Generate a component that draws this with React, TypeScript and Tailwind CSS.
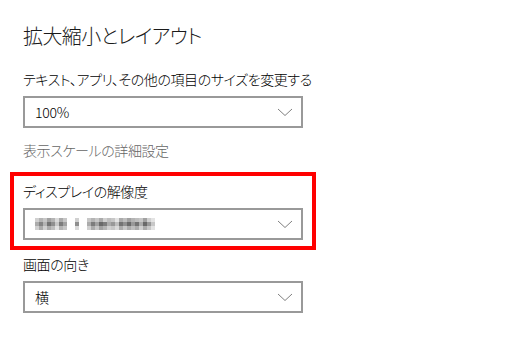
import React from "react";

const font = {
  fontFamily: '"Noto Sans CJK JP", "Noto Sans", sans-serif',
};

function Chevron() {
  return (
    <svg width="16" height="9" viewBox="0 0 16 9" className="mr-[6px]">
      <path d="M1 1 L8 7.5 L15 1" fill="none" stroke="#808080" strokeWidth="1" />
    </svg>
  );
}

function Dropdown({ children }: { children: React.ReactNode }) {
  return (
    <div className="w-[280px] h-[32px] border-2 border-[#999999] bg-white flex items-center justify-between pl-[10px] pr-[2px]">
      <div className="text-[14px] leading-[20px] text-black tracking-[-0.2px]">{children}</div>
      <Chevron />
    </div>
  );
}

const mosaic: number[][] = [
  [0.25, 0.4, 0.3, 0.5, 0.4, 0.2, 0.45, 0.3, 0, 0, 0.25, 0, 0, 0.3, 0.4, 0.3, 0.45, 0.25, 0.35, 0.3, 0.15, 0.45, 0.35, 0.5, 0.4, 0.35, 0.3, 0.5, 0.25, 0.15, 0, 0],
  [0.45, 0.65, 0.4, 0.75, 0.6, 0.3, 0.7, 0.5, 0, 0, 0.6, 0, 0, 0.45, 0.7, 0.5, 0.8, 0.7, 0.45, 0.55, 0.35, 0.75, 0.6, 0.8, 0.55, 0.75, 0.45, 0.8, 0.55, 0.3, 0, 0],
  [0.25, 0.45, 0.25, 0.45, 0.35, 0.15, 0.4, 0.3, 0, 0, 0.2, 0, 0, 0.25, 0.45, 0.3, 0.5, 0.4, 0.25, 0.3, 0.2, 0.45, 0.3, 0.45, 0.35, 0.45, 0.25, 0.45, 0.3, 0.15, 0, 0],
];

function Mosaic() {
  return (
    <svg width="128" height="12" viewBox="0 0 128 12" className="block">
      {mosaic.map((row, r) =>
        row.map((v, c) =>
          v > 0 ? (
            <rect
              key={`${r}-${c}`}
              x={c * 4}
              y={r * 4}
              width="4"
              height="4"
              fill="#444"
              fillOpacity={v}
            />
          ) : null
        )
      )}
    </svg>
  );
}

export default function App() {
  return (
    <div
      className="w-[527px] h-[340px] bg-white pl-[23px] pt-[22px] [font-feature-settings:'palt'] text-black font-light"
      style={font}
    >
      <div className="text-[20px] leading-[28px] text-[#1a1a1a] tracking-[-0.6px]">拡大縮小とレイアウト</div>
      <div className="mt-[19px] text-[14px] leading-[20px] tracking-[-0.4px]">
        テキスト、アプリ、その他の項目のサイズを変更する
      </div>
      <div className="mt-[7px]">
        <Dropdown>100%</Dropdown>
      </div>
      <div className="mt-[12px] text-[14px] leading-[20px] text-[#666666] tracking-[-0.4px]">
        表示スケールの詳細設定
      </div>
      <div className="mt-[12px] -ml-[13px] w-[306px] border-4 border-[#ff0000] pl-[9px] pt-[5px] pb-[6px]">
        <div className="text-[14px] leading-[20px] tracking-[-0.4px]">ディスプレイの解像度</div>
        <div className="mt-[7px]">
          <Dropdown>
            <Mosaic />
          </Dropdown>
        </div>
      </div>
      <div className="mt-[4px] text-[14px] leading-[20px] tracking-[-0.4px]">画面の向き</div>
      <div className="mt-[7px]">
        <Dropdown>横</Dropdown>
      </div>
    </div>
  );
}
